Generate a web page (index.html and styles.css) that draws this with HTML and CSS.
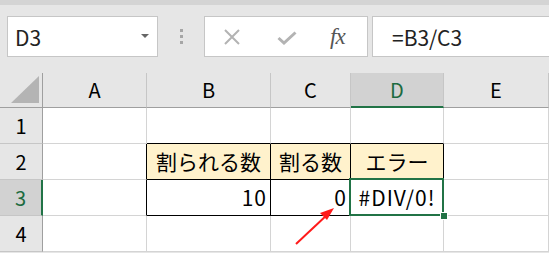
FILE: index.html
```html
<!DOCTYPE html>
<html lang="ja">
<head>
    <meta charset="UTF-8">
    <title>#DIV/0! エラー</title>
    <link rel="stylesheet" href="styles.css">
</head>
<body>

<div class="top-strip"></div>

<div class="toolbar">
    <div class="name-box">
        <span>D3</span>
        <span class="drop-arrow"></span>
    </div>
    <div class="grip">
        <span></span><span></span><span></span>
    </div>
    <div class="func-buttons">
        <svg class="icon-x" width="18" height="16" viewBox="0 0 18 16">
            <path d="M2 1 L16 15 M16 1 L2 15" stroke="#b3b3b3" stroke-width="2" fill="none"/>
        </svg>
        <svg class="icon-check" width="20" height="14" viewBox="0 0 20 14">
            <path d="M1.5 7 L7 12 L18.5 1.5" stroke="#b3b3b3" stroke-width="3" fill="none"/>
        </svg>
        <span class="icon-fx">fx</span>
    </div>
    <div class="formula-box">=B3/C3</div>
</div>

<div class="sheet">
    <div class="corner"><div class="corner-tri"></div></div>
    <div class="col-head">A</div>
    <div class="col-head">B</div>
    <div class="col-head">C</div>
    <div class="col-head active">D</div>
    <div class="col-head">E</div>

    <div class="row-head">1</div>
    <div class="cell"></div>
    <div class="cell above-box"></div>
    <div class="cell above-box"></div>
    <div class="cell above-box"></div>
    <div class="cell"></div>

    <div class="row-head">2</div>
    <div class="cell left-of-box"></div>
    <div class="cell boxed label">割られる数</div>
    <div class="cell boxed label">割る数</div>
    <div class="cell boxed label">エラー</div>
    <div class="cell"></div>

    <div class="row-head active">3</div>
    <div class="cell left-of-box"></div>
    <div class="cell boxed num">10</div>
    <div class="cell boxed num">0</div>
    <div class="cell boxed error selected">#DIV/0!</div>
    <div class="cell"></div>

    <div class="row-head">4</div>
    <div class="cell"></div>
    <div class="cell"></div>
    <div class="cell"></div>
    <div class="cell"></div>
    <div class="cell"></div>

    <svg class="pointer" width="60" height="50" viewBox="0 0 60 50">
        <path d="M4 46 L36 16" stroke="#ff1a1a" stroke-width="2" fill="none"/>
        <path d="M42 10 L28 15 L35 22 Z" fill="#ff1a1a"/>
    </svg>
</div>

</body>
</html>
```

FILE: styles.css
```css
body {
    margin: 0;
    background: #e6e6e6;
    font-family: "Noto Sans CJK JP", "Noto Sans", sans-serif;
    color: #000;
    overflow: hidden;
}
.top-strip {
    height: 5px;
    background: #d4d4d4;
}
.toolbar {
    display: flex;
    align-items: stretch;
    height: 41px;
    margin-top: 11px;
    padding-left: 7px;
}
.name-box {
    width: 151px;
    box-sizing: border-box;
    background: #fff;
    border: 1px solid #c6c6c6;
    display: flex;
    align-items: center;
    justify-content: space-between;
    padding: 0 8px 0 7px;
    font-size: 21px;
    color: #222;
}
.drop-arrow {
    width: 0;
    height: 0;
    border-left: 4px solid transparent;
    border-right: 4px solid transparent;
    border-top: 4px solid #666;
    margin-top: -2px;
}
.grip {
    width: 46px;
    display: flex;
    flex-direction: column;
    align-items: center;
    justify-content: center;
    gap: 3px;
}
.grip span {
    width: 3px;
    height: 3px;
    background: #a6a6a6;
}
.func-buttons {
    width: 164px;
    box-sizing: border-box;
    background: #fff;
    border: 1px solid #c6c6c6;
    display: flex;
    align-items: center;
    padding-left: 18px;
}
.icon-x {
    margin-right: 36px;
}
.icon-check {
    margin-right: 33px;
    margin-top: 2px;
}
.icon-fx {
    font-family: "Liberation Serif", "DejaVu Serif", serif;
    font-style: italic;
    font-size: 23px;
    color: #555;
    letter-spacing: -1px;
}
.formula-box {
    flex: 1;
    margin-left: 4px;
    background: #fff;
    border: 1px solid #c6c6c6;
    border-right: none;
    display: flex;
    align-items: center;
    padding-left: 19px;
    font-size: 21px;
    color: #222;
}
.sheet {
    position: relative;
    margin-top: 16px;
    display: grid;
    grid-template-columns: 43px 104px 124px 80px 93px 1fr;
    grid-template-rows: 35px 36px 36px 36px 36px;
    background: #fff;
}
.sheet > div {
    box-sizing: border-box;
    border-right: 1px solid #d4d4d4;
    border-bottom: 1px solid #d4d4d4;
    display: flex;
    align-items: center;
    font-size: 21px;
    line-height: 1;
    white-space: nowrap;
}
.corner {
    background: #e6e6e6;
    justify-content: flex-end;
    align-items: flex-end !important;
    padding: 0 3px 4px 0;
    border-right-color: #9f9f9f !important;
    border-bottom-color: #9f9f9f !important;
}
.corner-tri {
    width: 28px;
    height: 27px;
    background: #b4b4b4;
    clip-path: polygon(100% 0, 100% 100%, 0 100%);
}
.col-head {
    background: #e6e6e6;
    justify-content: center;
    border-right-color: #c6c6c6 !important;
    border-bottom-color: #9f9f9f !important;
    font-size: 20px !important;
}
.col-head.active {
    background: #d2d2d2;
    color: #1d6b40;
    border-bottom: 2px solid #217346 !important;
}
.row-head {
    background: #e6e6e6;
    justify-content: center;
    border-right-color: #9f9f9f !important;
    border-bottom-color: #c6c6c6 !important;
    font-size: 20px !important;
}
.row-head.active {
    background: #d2d2d2;
    color: #1d6b40;
    border-right: 2px solid #217346 !important;
}
.above-box {
    border-bottom-color: #000 !important;
}
.left-of-box {
    border-right-color: #000 !important;
}
.boxed {
    border-right-color: #000 !important;
    border-bottom-color: #000 !important;
}
.label {
    background: #fff2cc;
    justify-content: center;
    overflow: visible;
}
.num {
    justify-content: flex-end;
    padding-right: 3px;
    letter-spacing: 1px;
}
.error {
    justify-content: center;
    letter-spacing: 1px;
}
.selected {
    position: relative;
}
.selected::after {
    content: "";
    position: absolute;
    left: -2px;
    top: -2px;
    right: -1px;
    bottom: -1px;
    border: 2px solid #217346;
}
.selected::before {
    content: "";
    position: absolute;
    right: -5px;
    bottom: -5px;
    width: 6px;
    height: 6px;
    background: #217346;
    border: 1px solid #fff;
    z-index: 1;
}
.pointer {
    position: absolute;
    left: 292px;
    top: 125px;
}
```
